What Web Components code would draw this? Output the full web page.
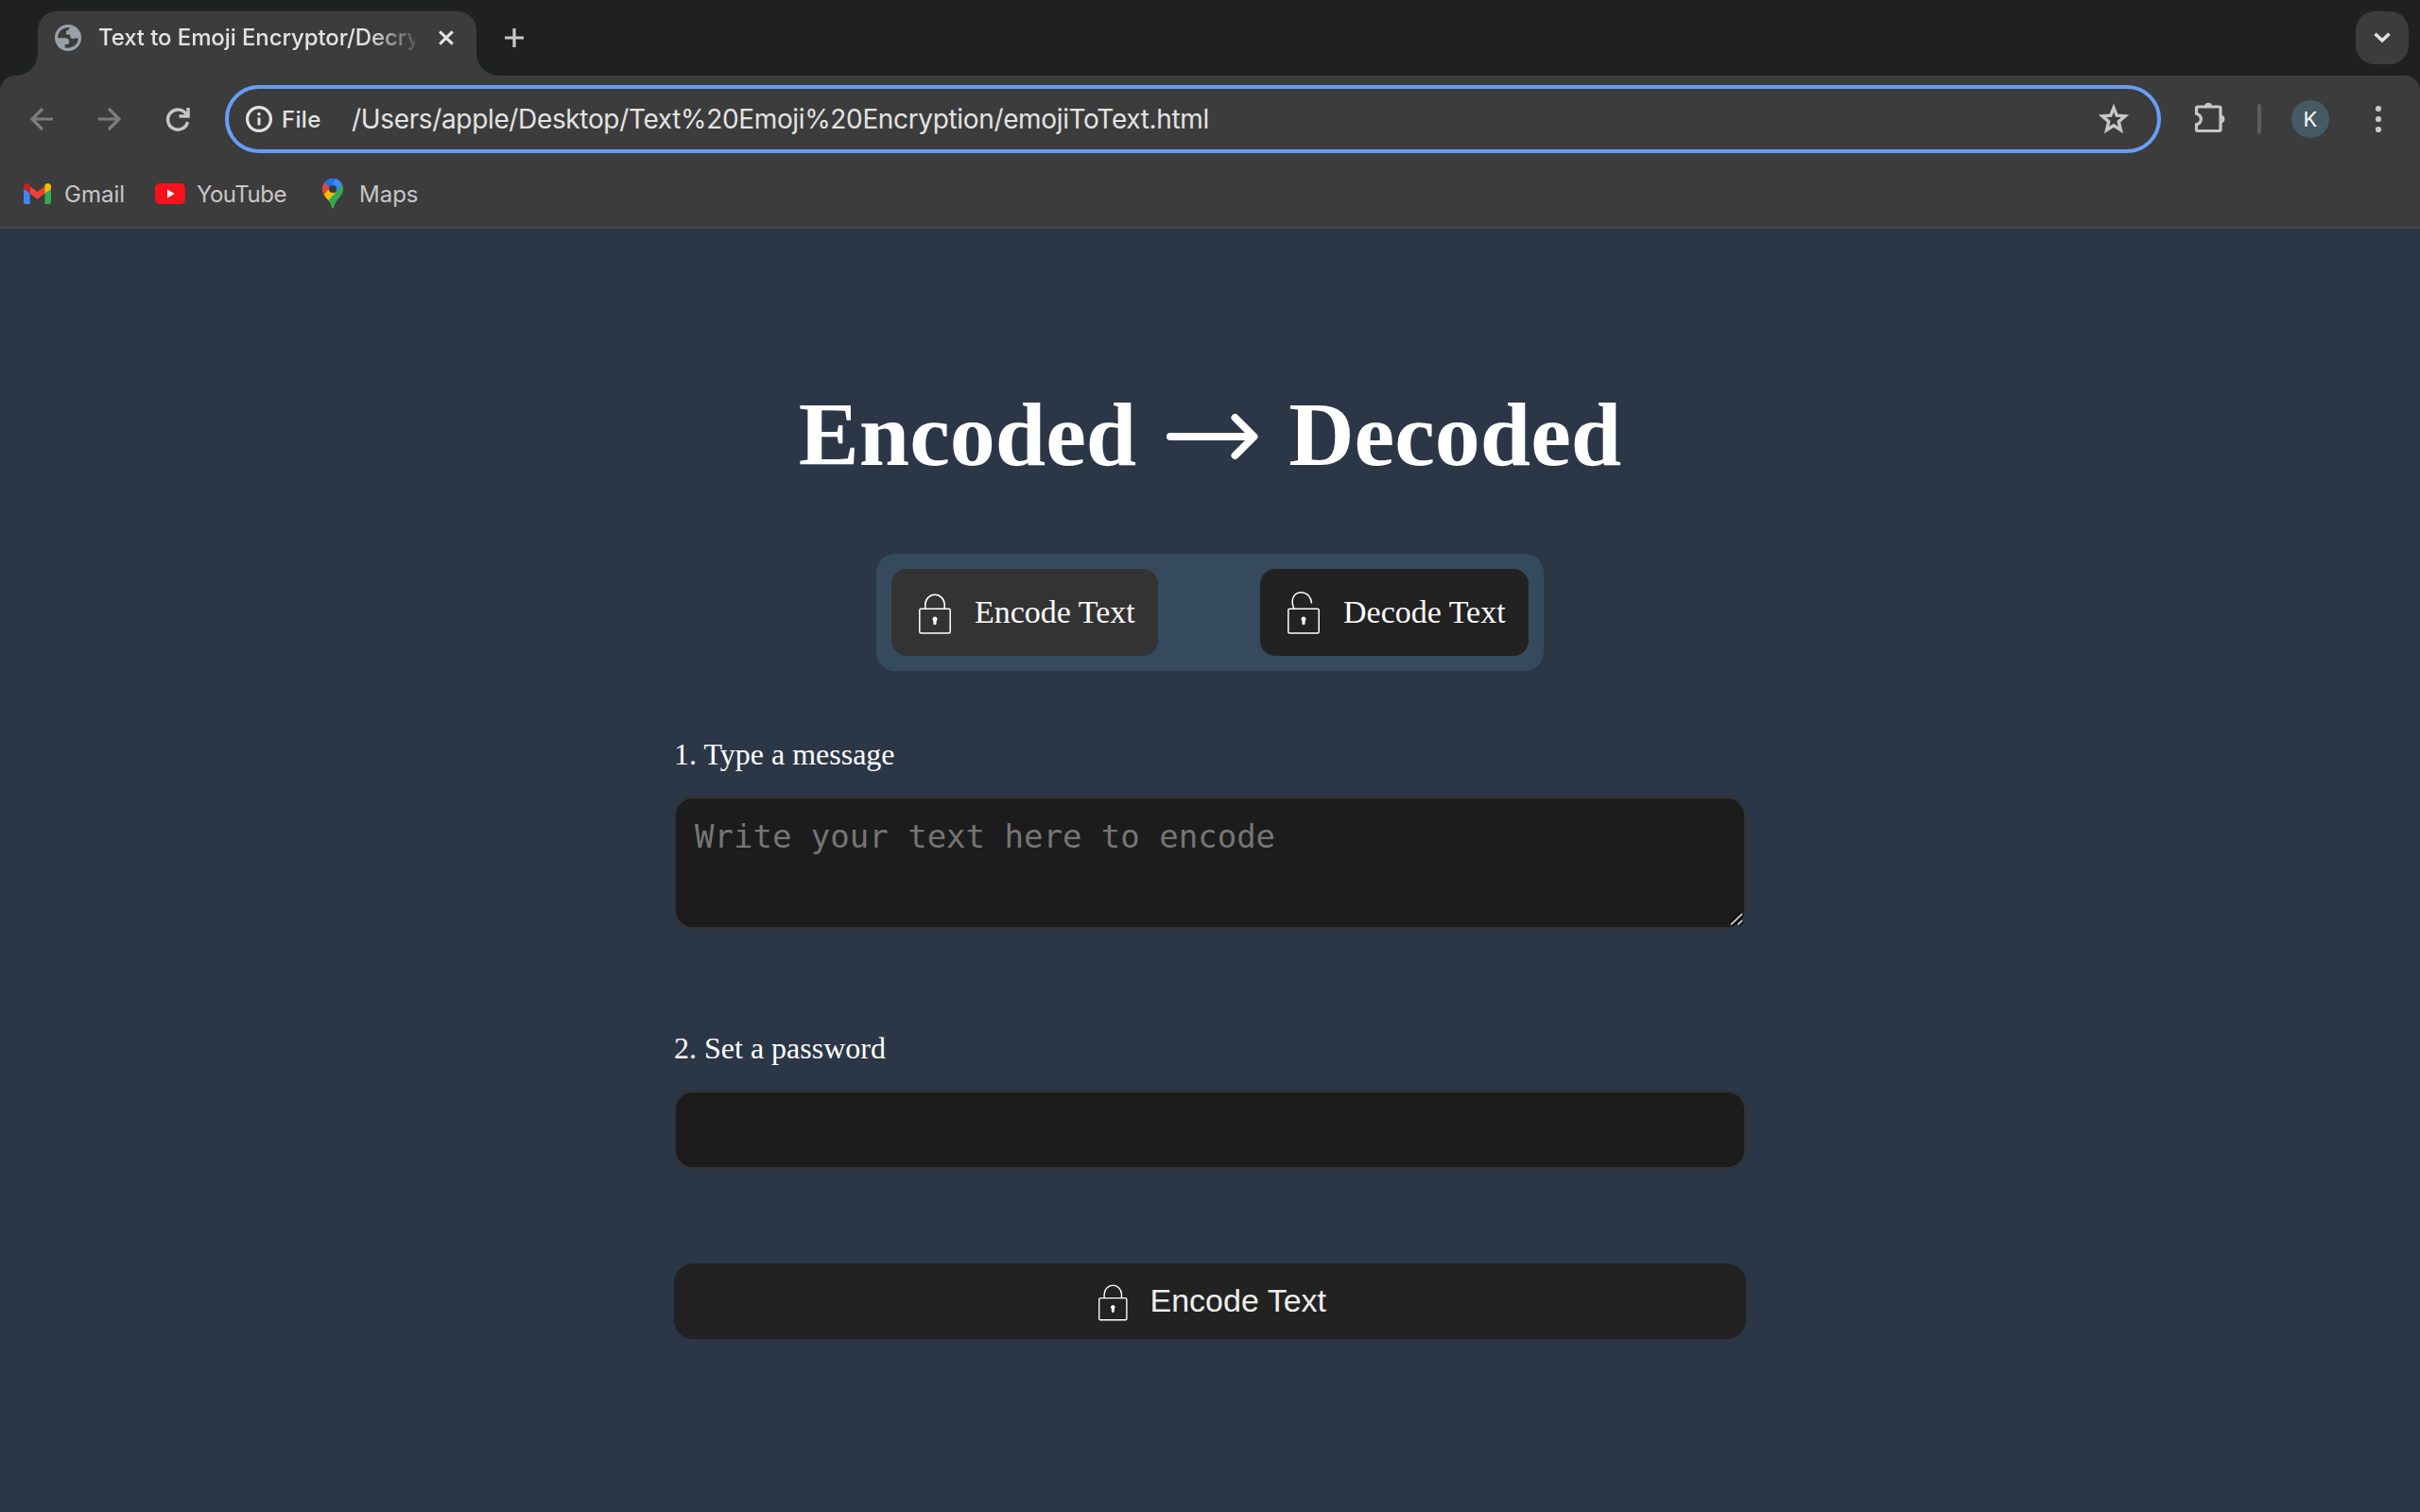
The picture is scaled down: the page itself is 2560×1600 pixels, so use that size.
<!DOCTYPE html>
<html lang="en">
<head>
<meta charset="utf-8">
<title>Text to Emoji Encryptor/Decryptor</title>
<style>
html, body { margin: 0; height: 100%; background: #2b3747; overflow: hidden; }
</style>
</head>
<body>
<emoji-app></emoji-app>
<script>
const define = (name, html) => {
  const t = document.createElement('template');
  t.innerHTML = html;
  customElements.define(name, class extends HTMLElement {
    constructor() {
      super();
      this.attachShadow({ mode: 'open' }).append(t.content.cloneNode(true));
    }
  });
};

/* name: [width, height, markup] */
const ICONS = {
  globe: [28, 28, '<circle cx="14" cy="14" r="14" fill="#9aa0a8"/><path fill="#3c3c3c" d="M3.2 13.2C3.4 7.400 8 3 15.600 2.900Q15.200 6.300 12.500 6.300H12V10.400H15.600Q16.300 10.400 16.300 12.200Q16.500 15 19.500 15Q21.200 13.800 24.900 14.800C24.500 20.800 20 25.300 10.700 24.600V21H13Q15.200 21 15.200 18.600Q15.200 14.200 11.200 14.200H3.200Z"/>'],
  close: [16, 14, '<path d="M1.200 .400L14.800 13.600M14.800 .400L1.200 13.600" stroke="#e3e3e3" stroke-width="3"/>'],
  plus: [20, 20, '<path d="M10 0V20M0 10H20" stroke="#c7c7c7" stroke-width="3.200"/>'],
  chevron: [20, 12, '<path d="M2.500 1.800L10 8.800L17.500 1.800" fill="none" stroke="#e3e3e3" stroke-width="3.400"/>'],
  back: [24, 24, '<path d="M13 1L2 12L13 23M2 12H24" fill="none" stroke="#7c7c7c" stroke-width="3.200"/>'],
  forward: [24, 24, '<path d="M11 1L22 12L11 23M22 12H0" fill="none" stroke="#7c7c7c" stroke-width="3.200"/>'],
  reload: [26, 24, '<path d="M22.500 7.500A10.600 10.600 0 1 0 23.500 15" fill="none" stroke="#c7c7c7" stroke-width="3.400"/><path d="M24 0V9H14.500" fill="none" stroke="#c7c7c7" stroke-width="3.400"/>'],
  info: [28, 28, '<circle cx="14" cy="14" r="12.400" fill="none" stroke="#e3e3e3" stroke-width="3.200"/><path d="M14 12.500V20.500" stroke="#e3e3e3" stroke-width="3"/><circle cx="14" cy="8.800" r="1.800" fill="#e3e3e3"/>'],
  star: [34, 32, '<path d="M17 4.200L20.200 12.200L29 12.900L22.300 18.600L24.400 27.500L17 22.700L9.600 27.500L11.700 18.600L5 12.900L13.800 12.200Z" fill="none" stroke="#c7c7c7" stroke-width="3.400"/>'],
  puzzle: [34, 34, '<path d="M4 6H26.500Q28 6 28 7.500V30Q28 31.500 26.500 31.500H4Q2.500 31.500 2.500 30V24.800Q7.300 23.300 7.300 19Q7.300 14.700 2.500 13.200V7.500Q2.500 6 4 6Z" fill="none" stroke="#c7c7c7" stroke-width="3.200"/><path d="M11 5A4.200 4.200 0 0 1 19.200 5ZM29 14.800A4.300 4.300 0 0 1 29 23.200Z" fill="#c7c7c7"/>'],
  dots: [8, 30, '<g fill="#c7c7c7"><circle cx="4" cy="4" r="3.100"/><circle cx="4" cy="15" r="3.100"/><circle cx="4" cy="26" r="3.100"/></g>'],
  gmail: [29, 22, '<path fill="#4285f4" d="M0 5V20Q0 22 2 22H6.600V10Z"/><path fill="#34a853" d="M29 5V20Q29 22 27 22H22.400V10Z"/><path fill="#ea4335" d="M6.600 3L14.500 9L22.400 3V10.800L14.500 16.700L6.600 10.800Z"/><path fill="#c5221f" d="M0 5V3.300C0 .200 3.400-1 5.600 .800L6.600 1.600V10.800L0 6Z"/><path fill="#fbbc04" d="M29 5V3.300C29 .200 25.600-1 23.400 .800L22.400 1.600V10.800L29 6Z"/>'],
  youtube: [32, 22, '<rect width="32" height="22" rx="5" fill="#f9101c"/><path d="M13 6.500L20.700 11L13 15.500Z" fill="#fff"/>'],
  maps: [22, 32, '<clipPath id="p"><path d="M11 0C4.800 0 0 4.900 0 11C0 18 6 20.500 8.700 27Q9.800 31.500 11 31.500Q12.200 31.500 13.300 27C16 20.500 22 18 22 11C22 4.900 17.200 0 11 0Z"/></clipPath><g clip-path="url(#p)"><path fill="#34a853" d="M0 0H22V32H0Z"/><path fill="#fbbc04" d="M-1 19L11 7L15 14L4 25.500Z"/><path fill="#ea4335" d="M-1 3H6L8 9L1 18H-1Z"/><path fill="#1a73e8" d="M2 4V-1H16L9 11Z"/><path fill="#4285f4" d="M14.500 -1H22V5L13 16L8 10Z"/></g><circle cx="11" cy="11" r="4.100" fill="#343b40"/>'],
  lock: [34, 44, '<g fill="none" stroke="#fff" stroke-width="1.500"><rect x=".8" y="16.300" width="32.400" height="25.700" rx="1.500"/><path d="M6.800 16V12A10.200 10.800 0 0 1 27.200 12V16"/></g><path fill="#fff" d="M17 24.500A2.600 2.600 0 0 1 18.700 29L18.500 32.500Q17 34 15.500 32.500L15.300 29A2.600 2.600 0 0 1 17 24.500Z"/>'],
  unlock: [34, 44, '<g fill="none" stroke="#fff" stroke-width="1.500"><rect x=".8" y="16.300" width="32.400" height="25.700" rx="1.500"/><path d="M6.800 16C2.500 6 7-1 14.500-1C21-1 25 4 25.500 10.500"/></g><path fill="#fff" d="M17 24.500A2.600 2.600 0 0 1 18.700 29L18.500 32.500Q17 34 15.500 32.500L15.300 29A2.600 2.600 0 0 1 17 24.500Z"/>'],
  arrow: [98, 50, '<path d="M5 25H93M73.500 5L93.500 25L73.500 45" fill="none" stroke="#fff" stroke-width="8" stroke-linecap="round" stroke-linejoin="round"/>'],
  grip: [16, 16, '<path d="M2 13.500L14 2M9.500 13.500L14 9" stroke="#000" stroke-width="5"/><path d="M2 13.500L14 2M9.500 13.500L14 9" stroke="#c4c4c4" stroke-width="2"/>']
};
customElements.define('ui-icon', class extends HTMLElement {
  constructor() { super(); this.attachShadow({ mode: 'open' }); }
  connectedCallback() {
    const [w, h, body] = ICONS[this.getAttribute('name')];
    const k = +(this.getAttribute('scale') || 1);
    this.shadowRoot.innerHTML = `<style>:host{display:block;flex:none;white-space:normal}svg{display:block;overflow:visible}</style>
      <svg width="${w * k}" height="${h * k}" viewBox="0 0 ${w} ${h}">${body}</svg>`;
  }
});

define('browser-tab', `
<style>
:host { display: flex; flex: none; align-items: center; box-sizing: border-box; position: relative; width: 464px; height: 68px;
  padding: 0 24px 12px 18px; background: #3c3c3c; border-radius: 20px 20px 0 0; color: #e3e3e3; }
:host::before, :host::after { content: ""; position: absolute; bottom: 0; width: 24px; height: 24px; }
:host::before { left: -24px; background: radial-gradient(circle at 0 0, transparent 23.500px, #3c3c3c 24.500px); }
:host::after { right: -24px; background: radial-gradient(circle at 100% 0, transparent 23.500px, #3c3c3c 24.500px); }
.title { margin: -2px auto 0 18px; width: 335px; white-space: nowrap; overflow: hidden; font-size: 24px; font-weight: 450; letter-spacing: -.1px;
  -webkit-mask-image: linear-gradient(90deg, #000 285px, transparent 345px); }
</style>
<ui-icon name="globe"></ui-icon><span class="title"><slot></slot></span><ui-icon name="close"></ui-icon>`);

define('tab-strip', `
<style>
:host { display: flex; height: 80px; box-sizing: border-box; padding: 12px 12px 0 40px; background: #1f2120; }
.new { padding: 18px 0 0 30px; }
.search { margin-left: auto; width: 56px; height: 56px; border-radius: 20px; background: #3c3c3c; display: grid; place-items: center; }
</style>
<slot></slot><ui-icon class="new" name="plus"></ui-icon><div class="search"><ui-icon name="chevron"></ui-icon></div>`);

define('address-bar', `
<style>
:host { display: flex; align-items: center; box-sizing: border-box; width: 2048px; height: 72px; border: 4px solid #679ef5;
  border-radius: 36px; padding: 0 29px 0 18px; color: #e3e3e3; }
.scheme { font-size: 24px; font-weight: 500; margin-left: 10px; width: 74px; letter-spacing: .3px; }
.url { font-size: 28px; white-space: nowrap; letter-spacing: -.35px; }
ui-icon[name=star] { margin-left: auto; }
</style>
<ui-icon name="info"></ui-icon><span class="scheme">File</span><span class="url"><slot></slot></span><ui-icon name="star"></ui-icon>`);

define('tool-bar', `
<style>
:host { display: block; background: #1f2120; }
.row { display: flex; align-items: center; height: 92px; background: #3c3c3c; border-radius: 16px 16px 0 0; padding-left: 32px; }
.fwd { margin-left: 48px; } .rel { margin: 0 37px 0 47px; }
.puz { margin-left: 35px; margin-top: -4px; }
.sep { width: 4px; height: 32px; border-radius: 2px; background: #5d5d5d; margin: 0 32px 0 33px; }
.avatar { width: 40px; height: 40px; border-radius: 50%; background: #455a64; color: #fff; display: grid; place-items: center; font-size: 22px; }
.menu { margin-left: 48px; }
</style>
<div class="row">
<ui-icon name="back"></ui-icon><ui-icon class="fwd" name="forward"></ui-icon><ui-icon class="rel" name="reload"></ui-icon>
<slot></slot>
<ui-icon class="puz" name="puzzle"></ui-icon><div class="sep"></div><div class="avatar">K</div><ui-icon class="menu" name="dots"></ui-icon>
</div>`);

define('bookmark-bar', `
<style>
:host { display: flex; height: 70px; box-sizing: border-box; padding: 0 0 2px 25px; align-items: center; background: #3c3c3c; border-bottom: 2px solid #484848;
  color: #c7c7c7; font-size: 24px; }
span { white-space: nowrap; }
.a { margin-left: 14px; width: 96px; } .b { margin-left: 12px; width: 133px; letter-spacing: -.5px; } .c { margin-left: 17px; }
</style>
<ui-icon name="gmail"></ui-icon><span class="a">Gmail</span>
<ui-icon name="youtube"></ui-icon><span class="b">YouTube</span>
<ui-icon name="maps"></ui-icon><span class="c">Maps</span>`);

define('mode-button', `
<style>
:host { display: flex; align-items: center; box-sizing: border-box; height: 92px; width: 282px; padding-left: 29px; border-radius: 16px; background: #222;
  color: #fff; font-size: 34px; white-space: nowrap; }
:host([active]) { background: #333; }
:host([wide]) { width: 284px; }
.label { margin-left: 25px; }
.icon { margin-top: 3px; }
</style>
<div class="icon"><slot name="icon"></slot></div><span class="label"><slot></slot></span>`);

define('mode-switch', `
<style>
:host { display: flex; justify-content: space-between; align-items: center; box-sizing: border-box; width: 706px; height: 124px; padding: 0 16px;
  background: #364a5d; border-radius: 20px; }
</style>
<slot></slot>`);

define('page-title', `
<style>
:host { display: flex; align-items: center; height: 110px; color: #fff; font-size: 96px; font-weight: 700; line-height: 110px; white-space: nowrap; }
ui-icon { margin: 3px 32px 0 31px; }
</style>
<slot name="from"></slot><ui-icon name="arrow"></ui-icon><slot name="to"></slot>`);

define('form-field', `
<style>
:host { display: flex; flex-direction: column; width: 1134px; }
.label { font-size: 32px; line-height: 36px; color: #fff; }
.box { position: relative; box-sizing: border-box; margin-top: 27px; height: var(--box-height); border: 2px solid #333; border-radius: 20px; background: #1c1c1c;
  padding: 20px; font: 34px/40px "DejaVu Sans Mono", monospace; color: #757575; }
.grip { position: absolute; right: 0; bottom: 0; display: none; }
:host([resizable]) .grip { display: block; }
</style>
<div class="label"><slot name="label"></slot></div>
<div class="box"><slot></slot><ui-icon class="grip" name="grip"></ui-icon></div>`);

define('submit-button', `
<style>
:host { display: flex; align-items: center; justify-content: center; box-sizing: border-box; width: 1134px; height: 80px; border-radius: 20px; background: #222;
  color: #eee; font: 34px "Liberation Sans", Arial, sans-serif; gap: 24px; padding: 0 0 2px 5px; }
ui-icon { margin-top: 5px; }
</style>
<ui-icon name="lock" scale=".9"></ui-icon><span><slot></slot></span>`);

define('emoji-app', `
<style>
:host { display: flex; flex-direction: column; height: 1600px; }
header { font-family: Inter, sans-serif; }
main { flex: 1; display: flex; flex-direction: column; align-items: center; font-family: "Liberation Serif", "Times New Roman", serif; background: #2b3747; }
page-title { margin-top: 163px; }
mode-switch { margin-top: 71px; }
.msg { margin-top: 70px; --box-height: 140px; }
.pwd { margin-top: 108px; --box-height: 83px; }
submit-button { margin-top: 100px; }
</style>
<header>
<tab-strip><browser-tab>Text to Emoji Encryptor/Decry</browser-tab></tab-strip>
<tool-bar><address-bar>/Users/apple/Desktop/Text%20Emoji%20Encryption/emojiToText.html</address-bar></tool-bar>
<bookmark-bar></bookmark-bar>
</header>
<main>
<page-title><span slot="from">Encoded</span><span slot="to">Decoded</span></page-title>
<mode-switch>
<mode-button active><ui-icon slot="icon" name="lock"></ui-icon>Encode Text</mode-button>
<mode-button wide><ui-icon slot="icon" name="unlock"></ui-icon>Decode Text</mode-button>
</mode-switch>
<form-field class="msg" resizable><span slot="label">1. Type a message</span>Write your text here to encode</form-field>
<form-field class="pwd"><span slot="label">2. Set a password</span></form-field>
<submit-button>Encode Text</submit-button>
</main>`);
</script>
</body>
</html>
